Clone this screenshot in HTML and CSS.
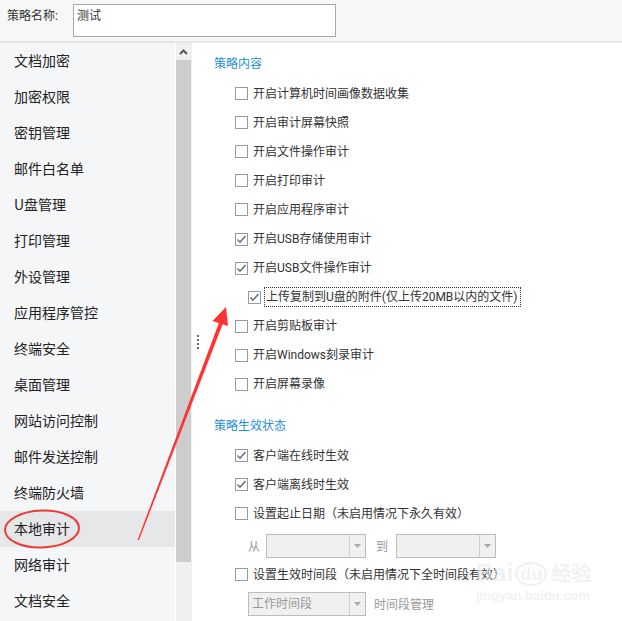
FILE: index.html
```html
<!DOCTYPE html>
<html lang="zh-CN">
<head>
<meta charset="utf-8">
<title>策略</title>
<link rel="stylesheet" href="styles.css">
</head>
<body>
<div class="page">
  <div class="topbar">
    <span class="top-label">策略名称:</span>
    <div class="top-input">测试</div>
  </div>
  <div class="main">
    <ul class="sidebar">
      <li class="nav-item">文档加密</li>
      <li class="nav-item">加密权限</li>
      <li class="nav-item">密钥管理</li>
      <li class="nav-item">邮件白名单</li>
      <li class="nav-item">U盘管理</li>
      <li class="nav-item">打印管理</li>
      <li class="nav-item">外设管理</li>
      <li class="nav-item">应用程序管控</li>
      <li class="nav-item">终端安全</li>
      <li class="nav-item">桌面管理</li>
      <li class="nav-item">网站访问控制</li>
      <li class="nav-item">邮件发送控制</li>
      <li class="nav-item">终端防火墙</li>
      <li class="nav-item active">本地审计</li>
      <li class="nav-item">网络审计</li>
      <li class="nav-item">文档安全</li>
    </ul>
    <div class="scrollbar">
      <div class="sb-up"><svg width="9" height="6" viewBox="0 0 9 6"><polyline points="1,5 4.5,1.5 8,5" fill="none" stroke="#555" stroke-width="2"/></svg></div>
      <div class="sb-thumb"></div>
      <div class="sb-track"></div>
    </div>
    <div class="content">
      <div class="splitter"><i></i><i></i><i></i><i></i></div>
      <div class="section-title">策略内容</div>
      <div class="row"><span class="cb"></span><span class="lbl">开启计算机时间画像数据收集</span></div>
      <div class="row"><span class="cb"></span><span class="lbl">开启审计屏幕快照</span></div>
      <div class="row"><span class="cb"></span><span class="lbl">开启文件操作审计</span></div>
      <div class="row"><span class="cb"></span><span class="lbl">开启打印审计</span></div>
      <div class="row"><span class="cb"></span><span class="lbl">开启应用程序审计</span></div>
      <div class="row"><span class="cb checked"><svg width="11" height="11" viewBox="0 0 11 11"><polyline points="1.5,5.5 4,8.2 9.5,2" fill="none" stroke="#666" stroke-width="1.4"/></svg></span><span class="lbl">开启USB存储使用审计</span></div>
      <div class="row"><span class="cb checked"><svg width="11" height="11" viewBox="0 0 11 11"><polyline points="1.5,5.5 4,8.2 9.5,2" fill="none" stroke="#666" stroke-width="1.4"/></svg></span><span class="lbl">开启USB文件操作审计</span></div>
      <div class="row indent"><span class="cb checked"><svg width="11" height="11" viewBox="0 0 11 11"><polyline points="1.5,5.5 4,8.2 9.5,2" fill="none" stroke="#666" stroke-width="1.4"/></svg></span><span class="lbl focus">上传复制到U盘的附件(仅上传20MB以内的文件)</span></div>
      <div class="row"><span class="cb"></span><span class="lbl">开启剪贴板审计</span></div>
      <div class="row"><span class="cb"></span><span class="lbl">开启Windows刻录审计</span></div>
      <div class="row"><span class="cb"></span><span class="lbl">开启屏幕录像</span></div>

      <div class="section-title second">策略生效状态</div>
      <div class="row"><span class="cb checked"><svg width="11" height="11" viewBox="0 0 11 11"><polyline points="1.5,5.5 4,8.2 9.5,2" fill="none" stroke="#666" stroke-width="1.4"/></svg></span><span class="lbl">客户端在线时生效</span></div>
      <div class="row"><span class="cb checked"><svg width="11" height="11" viewBox="0 0 11 11"><polyline points="1.5,5.5 4,8.2 9.5,2" fill="none" stroke="#666" stroke-width="1.4"/></svg></span><span class="lbl">客户端离线时生效</span></div>
      <div class="row"><span class="cb"></span><span class="lbl">设置起止日期（未启用情况下永久有效）</span></div>
      <div class="row sub date-row">
        <span class="dim">从</span>
        <div class="select w100"><span class="sel-text"></span><span class="sel-arrow"><svg width="7" height="4" viewBox="0 0 7 4"><polygon points="0,0 7,0 3.5,4" fill="#a8a8a8"/></svg></span></div>
        <span class="dim to">到</span>
        <div class="select w100"><span class="sel-text"></span><span class="sel-arrow"><svg width="7" height="4" viewBox="0 0 7 4"><polygon points="0,0 7,0 3.5,4" fill="#a8a8a8"/></svg></span></div>
      </div>
      <div class="row"><span class="cb"></span><span class="lbl">设置生效时间段（未启用情况下全时间段有效）</span></div>
      <div class="row sub2">
        <div class="select w118"><span class="sel-text">工作时间段</span><span class="sel-arrow"><svg width="7" height="4" viewBox="0 0 7 4"><polygon points="0,0 7,0 3.5,4" fill="#a8a8a8"/></svg></span></div>
        <span class="dim manage">时间段管理</span>
      </div>
    </div>
  </div>

  <div class="watermark">
    <div class="wm-line1"><span>Bai</span><span class="wm-paw">du</span><span class="wm-cn">经验</span></div>
    <div class="wm-line2">jingyan.baidu.com</div>
  </div>

  <svg class="annot" width="622" height="621" viewBox="0 0 622 621">
    <ellipse cx="42" cy="529" rx="37" ry="18.5" fill="none" stroke="#f03a3a" stroke-width="2" transform="rotate(-2 42 529)"/>
    <polygon points="137.6,540 139,540 223.5,322 219.8,320.5" fill="#f33"/>
    <polygon points="226,307 212.5,321 228,326" fill="#f33"/>
  </svg>
</div>
</body>
</html>
```

FILE: styles.css
```css
html, body {
  margin: 0;
  padding: 0;
}

body {
  font-family: "Noto Sans CJK SC", sans-serif;
  color: #333;
  background: #fff;
}

.page {
  position: relative;
  width: 622px;
  height: 621px;
  overflow: hidden;
}

.topbar {
  background: #f7f7f7;
  border-bottom: 2px solid #e6e6e6;
  display: flex;
  align-items: flex-start;
  padding: 4px 0 0 7px;
  box-sizing: border-box;
  height: 43px;
  font-family: "Roboto", "Noto Sans CJK SC", sans-serif;
}

.top-label {
  width: 66px;
  font-size: 12px;
  line-height: 24px;
  color: #333;
}

.top-input {
  width: 263px;
  height: 33px;
  box-sizing: border-box;
  border: 1px solid #a8a8a8;
  background: #fff;
  font-size: 12px;
  line-height: 22px;
  padding: 0 3px;
  color: #333;
}

.main {
  display: flex;
  height: 578px;
}

.sidebar {
  list-style: none;
  margin: 0;
  padding: 0;
  width: 175px;
  background: #f4f6f8;
  border-right: 1px solid #fff;
}

.nav-item {
  height: 36px;
  line-height: 35px;
  padding-left: 14px;
  font-size: 14px;
  color: #222;
}

.nav-item.active {
  background: #e6e7e9;
}

.scrollbar {
  width: 15px;
  display: flex;
  flex-direction: column;
  background: #f0f0f0;
  border-right: 1px solid #f0f0f0;
}

.sb-up {
  height: 17px;
  display: flex;
  align-items: center;
  justify-content: center;
}

.sb-thumb {
  height: 502px;
  background: #cdcdcd;
}

.sb-track {
  flex: 1;
}

.content {
  position: relative;
  flex: 1;
  padding: 6px 0 0 22px;
  background: #fff;
  font-family: "Roboto", "Noto Sans CJK SC", sans-serif;
}

.splitter {
  position: absolute;
  left: 5px;
  top: 292px;
  display: flex;
  flex-direction: column;
  gap: 2px;
}

.splitter i {
  display: block;
  width: 2px;
  height: 2px;
  background: #666;
}

.section-title {
  height: 30px;
  line-height: 30px;
  font-size: 12px;
  color: #1e8fd6;
}

.section-title.second {
  margin-top: 12px;
}

.row {
  height: 29.1px;
  display: flex;
  align-items: center;
  padding-left: 21px;
  font-size: 12px;
  color: #333;
}

.row.indent {
  padding-left: 34px;
}

.cb {
  width: 13px;
  height: 13px;
  box-sizing: border-box;
  border: 1px solid #9a9a9a;
  background: #fff;
  margin-right: 5px;
  display: flex;
  align-items: center;
  justify-content: center;
  flex: none;
}

.lbl {
  white-space: nowrap;
  line-height: 18px;
}

.lbl.focus {
  outline: 1px dotted #333;
  padding: 0 2px 0 1px;
  margin-left: -1px;
}

.row.sub {
  height: 29px;
  margin-top: 3px;
  padding-left: 34px;
}

.row.sub2 {
  height: 29px;
  padding-left: 34px;
}

.dim {
  color: #999;
  font-size: 12px;
}

.date-row .dim {
  margin-right: 6px;
}

.date-row .to {
  margin-left: 10px;
  margin-right: 8px;
}

.select {
  height: 24px;
  box-sizing: border-box;
  border: 1px solid #bdbdbd;
  background: #f0f0f0;
  display: flex;
  align-items: stretch;
}

.select.w100 {
  width: 100px;
}

.select.w118 {
  width: 118px;
}

.sel-text {
  flex: 1;
  font-size: 12px;
  color: #999;
  line-height: 22px;
  padding-left: 3px;
}

.sel-arrow {
  width: 15px;
  border-left: 1px solid #cfcfcf;
  display: flex;
  align-items: center;
  justify-content: center;
}

.manage {
  margin-left: 8px;
}

.watermark {
  position: absolute;
  left: 476px;
  top: 558px;
  color: rgba(232, 232, 232, 0.6);
  font-family: "Liberation Sans", Arial, sans-serif;
  pointer-events: none;
}

.wm-line1 {
  display: flex;
  align-items: flex-end;
  font-size: 24px;
  font-weight: bold;
  line-height: 30px;
}

.wm-paw {
  font-size: 18px;
  margin: 0 4px 2px 2px;
  border: 2px solid rgba(232, 232, 232, 0.6);
  border-radius: 50%;
  padding: 0 3px;
  line-height: 20px;
}

.wm-cn {
  font-family: "Noto Sans CJK SC", sans-serif;
  font-size: 20px;
}

.wm-line2 {
  font-size: 13px;
  font-weight: bold;
  line-height: 16px;
}

.annot {
  position: absolute;
  left: 0;
  top: 0;
  pointer-events: none;
}
```
